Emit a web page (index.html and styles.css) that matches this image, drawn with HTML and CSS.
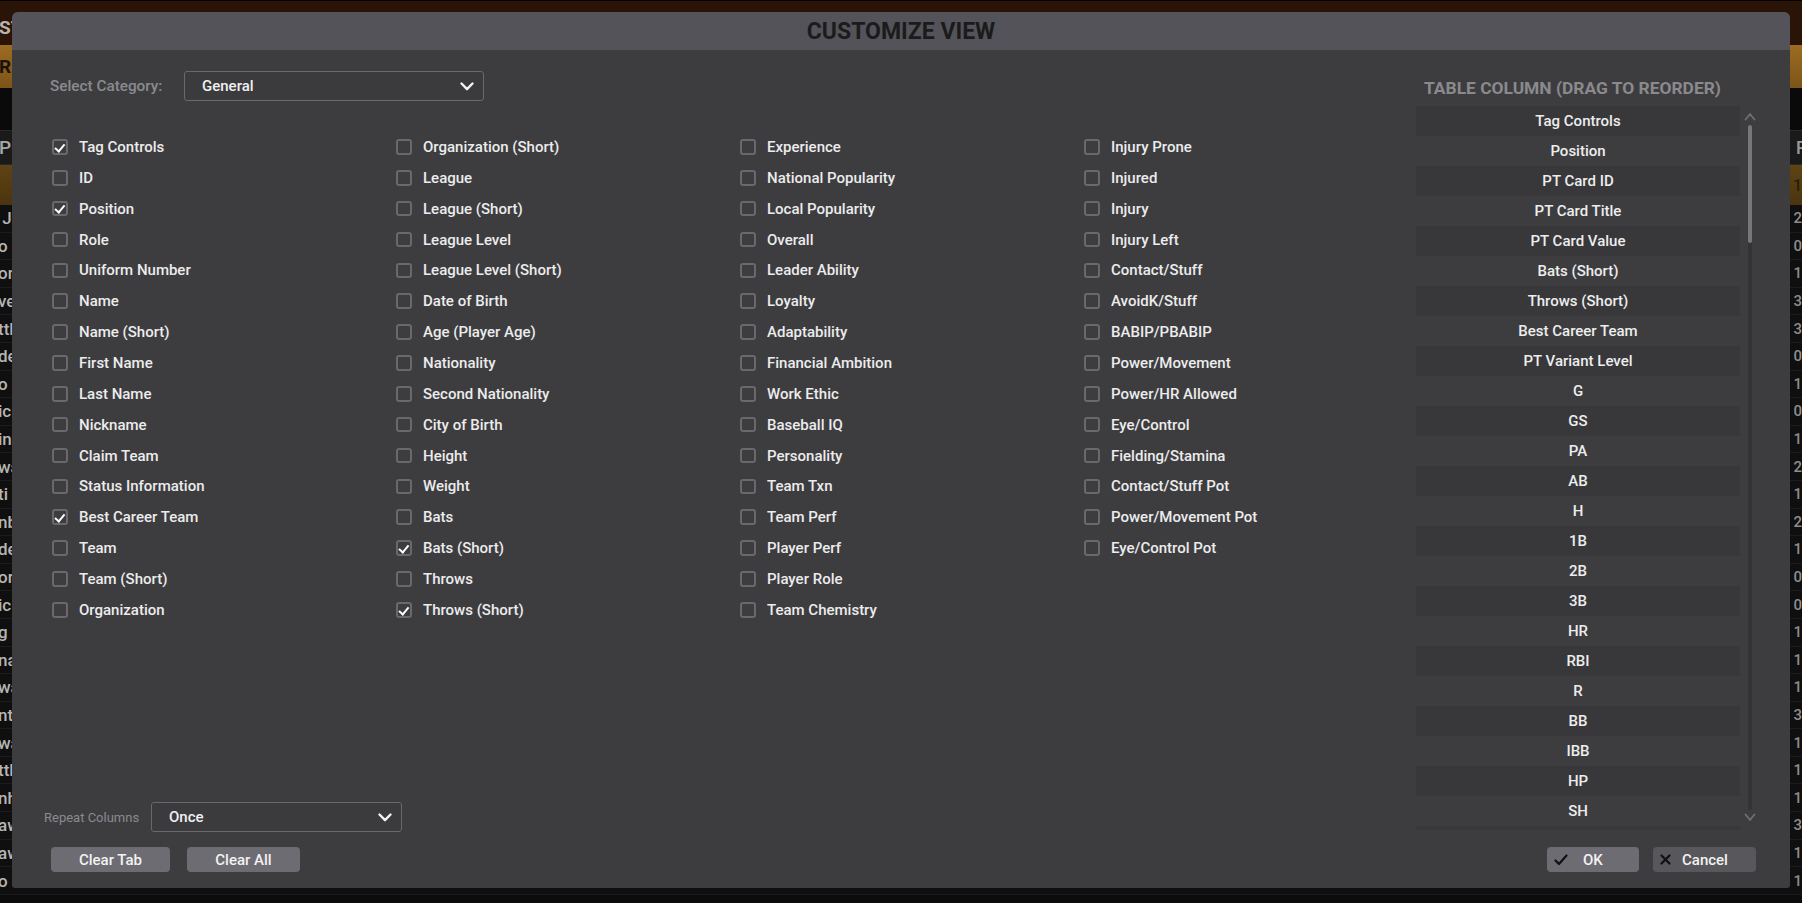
FILE: index.html
```html
<!DOCTYPE html>
<html>
<head>
<meta charset="utf-8">
<link rel="stylesheet" href="styles.css">
</head>
<body>
<div class="app">
  <div class="bg-top"><span class="bl">ST</span></div>
  <div class="bg-gold"><span class="bl">RS</span></div>
  <div class="bg-black"></div>
  <div class="bg-head"><span class="bl">PO</span><span class="br">Pit</span></div>
  <div class="bg-sel"><span class="bl"></span><span class="br">1</span></div>
  <div class="bg-rows">
    <div class="bg-row"><span class="bl">&nbsp;J</span><span class="br">2</span></div>
    <div class="bg-row"><span class="bl">o</span><span class="br">0</span></div>
    <div class="bg-row"><span class="bl">on</span><span class="br">1</span></div>
    <div class="bg-row"><span class="bl">ve</span><span class="br">3</span></div>
    <div class="bg-row"><span class="bl">ttl</span><span class="br">3</span></div>
    <div class="bg-row"><span class="bl">de</span><span class="br">0</span></div>
    <div class="bg-row"><span class="bl">o</span><span class="br">1</span></div>
    <div class="bg-row"><span class="bl">ic</span><span class="br">0</span></div>
    <div class="bg-row"><span class="bl">in</span><span class="br">1</span></div>
    <div class="bg-row"><span class="bl">wa</span><span class="br">2</span></div>
    <div class="bg-row"><span class="bl">ti</span><span class="br">1</span></div>
    <div class="bg-row"><span class="bl">nb</span><span class="br">2</span></div>
    <div class="bg-row"><span class="bl">de</span><span class="br">1</span></div>
    <div class="bg-row"><span class="bl">or</span><span class="br">0</span></div>
    <div class="bg-row"><span class="bl">ic</span><span class="br">0</span></div>
    <div class="bg-row"><span class="bl">g</span><span class="br">1</span></div>
    <div class="bg-row"><span class="bl">na</span><span class="br">1</span></div>
    <div class="bg-row"><span class="bl">wa</span><span class="br">1</span></div>
    <div class="bg-row"><span class="bl">nt</span><span class="br">3</span></div>
    <div class="bg-row"><span class="bl">wa</span><span class="br">1</span></div>
    <div class="bg-row"><span class="bl">ttl</span><span class="br">1</span></div>
    <div class="bg-row"><span class="bl">nh</span><span class="br">1</span></div>
    <div class="bg-row"><span class="bl">aw</span><span class="br">3</span></div>
    <div class="bg-row"><span class="bl">aw</span><span class="br">1</span></div>
    <div class="bg-row"><span class="bl">o</span><span class="br">1</span></div>
  </div>
</div>

<div class="dialog">
  <div class="dlg-head">CUSTOMIZE VIEW</div>
  <div class="dlg-body">
    <div class="main">
      <div class="left">
        <div class="cat-row">
          <span class="cat-label">Select Category:</span>
          <div class="select cat-select"><span>General</span>
            <svg class="chev" width="14" height="9" viewBox="0 0 14 9"><path d="M1.5 1.5 L7 7.2 L12.5 1.5" fill="none" stroke="#f2f2f2" stroke-width="2.4" stroke-linecap="round" stroke-linejoin="round"/></svg>
          </div>
        </div>
        <div class="grid">
          <label class="item"><span class="cb on"></span>Tag Controls</label>
          <label class="item"><span class="cb"></span>ID</label>
          <label class="item"><span class="cb on"></span>Position</label>
          <label class="item"><span class="cb"></span>Role</label>
          <label class="item"><span class="cb"></span>Uniform Number</label>
          <label class="item"><span class="cb"></span>Name</label>
          <label class="item"><span class="cb"></span>Name (Short)</label>
          <label class="item"><span class="cb"></span>First Name</label>
          <label class="item"><span class="cb"></span>Last Name</label>
          <label class="item"><span class="cb"></span>Nickname</label>
          <label class="item"><span class="cb"></span>Claim Team</label>
          <label class="item"><span class="cb"></span>Status Information</label>
          <label class="item"><span class="cb on"></span>Best Career Team</label>
          <label class="item"><span class="cb"></span>Team</label>
          <label class="item"><span class="cb"></span>Team (Short)</label>
          <label class="item"><span class="cb"></span>Organization</label>

          <label class="item"><span class="cb"></span>Organization (Short)</label>
          <label class="item"><span class="cb"></span>League</label>
          <label class="item"><span class="cb"></span>League (Short)</label>
          <label class="item"><span class="cb"></span>League Level</label>
          <label class="item"><span class="cb"></span>League Level (Short)</label>
          <label class="item"><span class="cb"></span>Date of Birth</label>
          <label class="item"><span class="cb"></span>Age (Player Age)</label>
          <label class="item"><span class="cb"></span>Nationality</label>
          <label class="item"><span class="cb"></span>Second Nationality</label>
          <label class="item"><span class="cb"></span>City of Birth</label>
          <label class="item"><span class="cb"></span>Height</label>
          <label class="item"><span class="cb"></span>Weight</label>
          <label class="item"><span class="cb"></span>Bats</label>
          <label class="item"><span class="cb on"></span>Bats (Short)</label>
          <label class="item"><span class="cb"></span>Throws</label>
          <label class="item"><span class="cb on"></span>Throws (Short)</label>

          <label class="item"><span class="cb"></span>Experience</label>
          <label class="item"><span class="cb"></span>National Popularity</label>
          <label class="item"><span class="cb"></span>Local Popularity</label>
          <label class="item"><span class="cb"></span>Overall</label>
          <label class="item"><span class="cb"></span>Leader Ability</label>
          <label class="item"><span class="cb"></span>Loyalty</label>
          <label class="item"><span class="cb"></span>Adaptability</label>
          <label class="item"><span class="cb"></span>Financial Ambition</label>
          <label class="item"><span class="cb"></span>Work Ethic</label>
          <label class="item"><span class="cb"></span>Baseball IQ</label>
          <label class="item"><span class="cb"></span>Personality</label>
          <label class="item"><span class="cb"></span>Team Txn</label>
          <label class="item"><span class="cb"></span>Team Perf</label>
          <label class="item"><span class="cb"></span>Player Perf</label>
          <label class="item"><span class="cb"></span>Player Role</label>
          <label class="item"><span class="cb"></span>Team Chemistry</label>

          <label class="item"><span class="cb"></span>Injury Prone</label>
          <label class="item"><span class="cb"></span>Injured</label>
          <label class="item"><span class="cb"></span>Injury</label>
          <label class="item"><span class="cb"></span>Injury Left</label>
          <label class="item"><span class="cb"></span>Contact/Stuff</label>
          <label class="item"><span class="cb"></span>AvoidK/Stuff</label>
          <label class="item"><span class="cb"></span>BABIP/PBABIP</label>
          <label class="item"><span class="cb"></span>Power/Movement</label>
          <label class="item"><span class="cb"></span>Power/HR Allowed</label>
          <label class="item"><span class="cb"></span>Eye/Control</label>
          <label class="item"><span class="cb"></span>Fielding/Stamina</label>
          <label class="item"><span class="cb"></span>Contact/Stuff Pot</label>
          <label class="item"><span class="cb"></span>Power/Movement Pot</label>
          <label class="item"><span class="cb"></span>Eye/Control Pot</label>
        </div>
        <div class="repeat-row">
          <span class="rep-label">Repeat Columns</span>
          <div class="select rep-select"><span>Once</span>
            <svg class="chev" width="14" height="9" viewBox="0 0 14 9"><path d="M1.5 1.5 L7 7.2 L12.5 1.5" fill="none" stroke="#f2f2f2" stroke-width="2.4" stroke-linecap="round" stroke-linejoin="round"/></svg>
          </div>
        </div>
      </div>
      <div class="right">
        <div class="list-title">TABLE COLUMN (DRAG TO REORDER)</div>
        <div class="list-wrap">
          <div class="list">
            <div class="row">Tag Controls</div>
            <div class="row">Position</div>
            <div class="row">PT Card ID</div>
            <div class="row">PT Card Title</div>
            <div class="row">PT Card Value</div>
            <div class="row">Bats (Short)</div>
            <div class="row">Throws (Short)</div>
            <div class="row">Best Career Team</div>
            <div class="row">PT Variant Level</div>
            <div class="row">G</div>
            <div class="row">GS</div>
            <div class="row">PA</div>
            <div class="row">AB</div>
            <div class="row">H</div>
            <div class="row">1B</div>
            <div class="row">2B</div>
            <div class="row">3B</div>
            <div class="row">HR</div>
            <div class="row">RBI</div>
            <div class="row">R</div>
            <div class="row">BB</div>
            <div class="row">IBB</div>
            <div class="row">HP</div>
            <div class="row">SH</div>
            <div class="row"></div>
          </div>
          <div class="scroll">
            <svg class="arrow" width="12" height="9" viewBox="0 0 12 9"><path d="M1.5 7.5 L6 2 L10.5 7.5" fill="none" stroke="#6f6f74" stroke-width="1.8" stroke-linecap="round" stroke-linejoin="round"/></svg>
            <div class="track"><div class="thumb"></div></div>
            <svg class="arrow" width="12" height="9" viewBox="0 0 12 9"><path d="M1.5 1.5 L6 7 L10.5 1.5" fill="none" stroke="#6f6f74" stroke-width="1.8" stroke-linecap="round" stroke-linejoin="round"/></svg>
          </div>
        </div>
      </div>
    </div>
    <div class="footer">
      <div class="btns btns-left">
        <div class="btn clear-tab">Clear Tab</div>
        <div class="btn clear-all">Clear All</div>
      </div>
      <div class="btns btns-right">
        <div class="btn ok">
          <svg width="14" height="12" viewBox="0 0 14 12"><path d="M1.5 6.5 L5 10 L12.5 1.5" fill="none" stroke="#111" stroke-width="2.2" stroke-linecap="round" stroke-linejoin="round"/></svg>
          <span>OK</span>
        </div>
        <div class="btn cancel">
          <svg width="11" height="11" viewBox="0 0 11 11"><path d="M1.5 1.5 L9.5 9.5 M9.5 1.5 L1.5 9.5" fill="none" stroke="#111" stroke-width="2.2" stroke-linecap="round"/></svg>
          <span>Cancel</span>
        </div>
      </div>
    </div>
  </div>
</div>
</body>
</html>
```
FILE: styles.css
```css
* { box-sizing: border-box; }
html, body { margin: 0; padding: 0; }
body {
  width: 1802px;
  height: 903px;
  overflow: hidden;
  background: #0d0c0c;
  font-family: Roboto, "Liberation Sans", sans-serif;
  position: relative;
}

/* background app (dimmed behind the modal) */
.app {
  display: flex;
  flex-direction: column;
  height: 903px;
}
.app .bl, .app .br {
  font-size: 16px;
  font-weight: 500;
  color: #bdbdbd;
  white-space: pre;
}
.app > div { display: flex; justify-content: space-between; align-items: center; }
.bg-top {
  height: 45px;
  background: #2a1407;
  border-top: 1px solid #050302;
}
.bg-top .bl { font-weight: 700; color: #b9b3ad; font-size: 19px; margin-top: 8px; margin-left: -1px; }
.bg-gold {
  height: 43px;
  background: linear-gradient(#9b6c22, #7d5418);
}
.bg-gold .bl { font-weight: 700; color: #1c1208; font-size: 19px; margin-left: -1px; }
.bg-black { height: 42px; background: #0a0a0a; }
.bg-head { height: 35px; background: #1a1a1a; border-top: 1px solid #2a2a2a; border-bottom: 1px solid #2a2a2a; }
.bg-head .bl { font-size: 19px; color: #a9a9a9; margin-left: -1px; }
.bg-head .br { font-size: 18px; color: #9a9a9a; margin-right: -16px; }
.bg-sel { height: 40px; background: linear-gradient(#5e4313, #4a340f); }
.bg-sel .br { color: #2a1c08; }
.bg-rows { flex-direction: column; align-items: stretch !important; }
.bg-row {
  height: 27.6px;
  display: flex;
  justify-content: space-between;
  align-items: center;
  background: #0f0f0f;
  border-bottom: 1px solid #1b1b1b;
}
.bg-row .bl { color: #b5b5b5; font-size: 17px; margin-left: -2px; }
.bg-row .br { color: #8d8d8d; font-size: 15px; margin-right: 0; }

/* dialog */
.dialog {
  position: absolute;
  left: 12px;
  top: 12px;
  width: 1778px;
  height: 876px;
  background: #3d3d40;
  border-radius: 6px 6px 3px 3px;
  display: flex;
  flex-direction: column;
  color: #ededed;
}
.dlg-head {
  height: 38px;
  flex: none;
  background: #545359;
  border-radius: 6px 6px 0 0;
  display: flex;
  align-items: center;
  justify-content: center;
  font-size: 23px;
  font-weight: 700;
  color: #1b1b1d;
  padding-top: 1px;
}
.dlg-body {
  flex: 1;
  display: flex;
  flex-direction: column;
  padding: 21px 34px 16px 32px;
}
.main {
  flex: 1;
  display: flex;
}
.left {
  flex: 1;
  min-width: 0;
  display: flex;
  flex-direction: column;
}
.cat-row {
  height: 30px;
  display: flex;
  align-items: center;
}
.cat-label {
  margin-left: 6px;
  width: 134px;
  font-size: 15.3px;
  font-weight: 500;
  color: #8b8b8f;
}
.select {
  height: 30px;
  border: 1px solid #69686d;
  border-radius: 3px;
  background: #3b3b3e;
  display: flex;
  align-items: center;
  justify-content: space-between;
  font-size: 15px;
  font-weight: 500;
  color: #f0f0f0;
}
.cat-select { width: 300px; padding: 0 9px 0 17px; }
.rep-select { width: 251px; padding: 0 9px 0 17px; }
.chev { display: block; }

.grid {
  margin-top: 30.5px;
  margin-left: 8px;
  display: grid;
  grid-template-columns: 344px 344px 344px 1fr;
  grid-template-rows: repeat(16, 30.87px);
  grid-auto-flow: column;
}
.item {
  display: flex;
  align-items: center;
  font-size: 15px;
  font-weight: 500;
  color: #ececec;
  white-space: nowrap;
}
.cb {
  width: 15.5px;
  height: 15.5px;
  border: 2px solid #68686d;
  border-radius: 3px;
  margin-right: 11.5px;
  flex: none;
  position: relative;
}
.cb.on::after {
  content: "";
  position: absolute;
  left: 3.2px;
  top: 0.5px;
  width: 4px;
  height: 7.5px;
  border-right: 2.2px solid #ffffff;
  border-bottom: 2.2px solid #ffffff;
  transform: rotate(40deg);
}

.repeat-row {
  margin-top: auto;
  height: 30px;
  display: flex;
  align-items: center;
}
.rep-label {
  width: 107px;
  font-size: 13px;
  font-weight: 400;
  color: #8a8a8e;
}

/* right column */
.right {
  width: 340px;
  flex: none;
  display: flex;
  flex-direction: column;
}
.list-title {
  height: 35px;
  line-height: 35px;
  padding-left: 8px;
  font-size: 17.4px;
  font-weight: 700;
  color: #8a8a8d;
  white-space: nowrap;
}
.list-wrap {
  height: 724px;
  display: flex;
  gap: 4px;
}
.list {
  width: 324px;
  height: 724px;
  overflow: hidden;
}
.row {
  height: 30px;
  line-height: 30px;
  text-align: center;
  font-size: 15px;
  font-weight: 500;
  color: #ededed;
}
.row:nth-child(odd) { background: #38383b; }
.scroll {
  width: 12px;
  display: flex;
  flex-direction: column;
  align-items: center;
}
.arrow { display: block; flex: none; }
.scroll .arrow:first-child { margin-top: 6px; }
.track {
  width: 4px;
  margin: 4px 0 3px;
  height: 685px;
  background: #343437;
  border-radius: 2px;
}
.thumb {
  width: 4px;
  height: 118px;
  background: #77777b;
  border-radius: 2px;
}

/* footer */
.footer {
  margin-top: 15px;
  height: 25px;
  display: flex;
  justify-content: space-between;
}
.btns { display: flex; }
.btns-left { gap: 17px; margin-left: 7px; }
.btns-right { gap: 14px; }
.btn {
  height: 25px;
  border-radius: 4px;
  background: #6d6c72;
  color: #f2f2f2;
  font-size: 15px;
  font-weight: 500;
  display: flex;
  align-items: center;
  justify-content: center;
}
.clear-tab { width: 119px; }
.clear-all { width: 113px; }
.ok { width: 92px; justify-content: flex-start; padding-left: 7px; gap: 15px; }
.cancel { width: 103px; background: #58575c; justify-content: flex-start; padding-left: 7px; gap: 11px; }
.btn svg { display: block; }
```
